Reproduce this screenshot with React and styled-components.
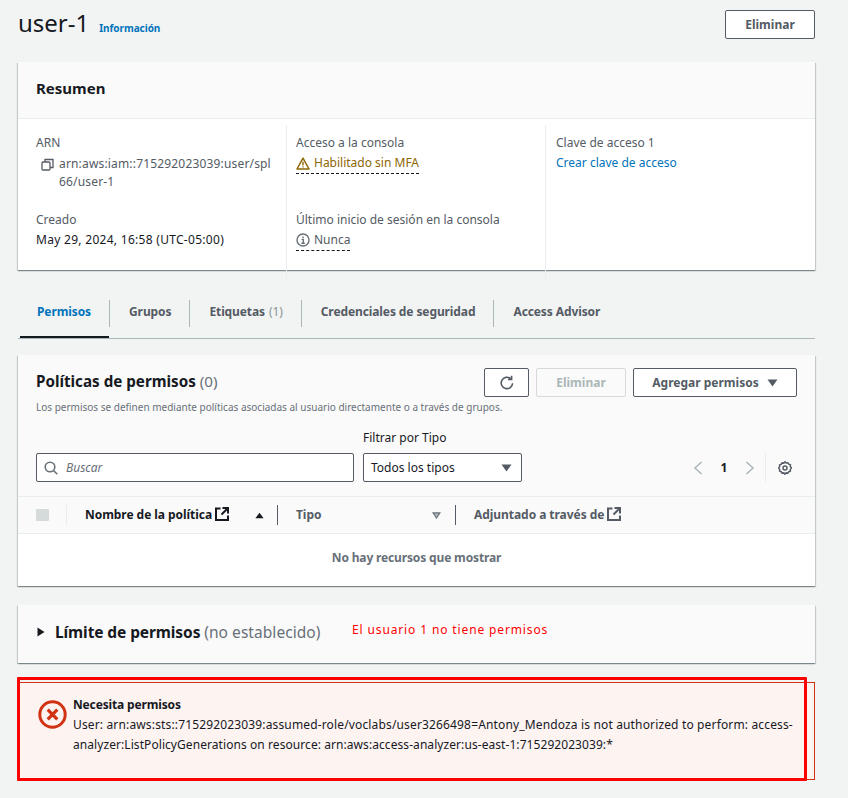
import styled, { createGlobalStyle } from 'styled-components'

const GlobalStyle = createGlobalStyle`
  html, body { margin: 0; padding: 0; background: #f2f3f3; }
  body { font-family: "Noto Sans", "Open Sans", sans-serif; font-size: 12px; color: #16191f; }
`

const Page = styled.div`
  position: relative;
  width: 848px;
  height: 798px;
  overflow: hidden;
  box-sizing: border-box;
  padding: 10px 33px 0 18px;
`

const Header = styled.div`
  display: flex;
  justify-content: space-between;
  align-items: flex-start;
  height: 52px;
`

const TitleRow = styled.div`
  display: flex;
  align-items: baseline;
  gap: 10px;
  margin-top: -3px;
`

const Title = styled.h1`
  margin: 0;
  font-size: 24px;
  line-height: 32px;
  font-weight: 400;
`

const InfoLink = styled.a`
  font-size: 10px;
  font-weight: 700;
  letter-spacing: -0.05px;
  color: #0073bb;
`

const Button = styled.button`
  box-sizing: border-box;
  height: 29px;
  width: ${p => p.$width}px;
  background: ${p => (p.$disabled ? 'transparent' : '#fff')};
  border: 1px solid ${p => (p.$disabled ? '#d5dbdb' : '#545b64')};
  border-radius: 2px;
  color: ${p => (p.$disabled ? '#aab7b8' : '#545b64')};
  font-family: inherit;
  font-size: 12px;
  font-weight: 700;
  display: flex;
  align-items: center;
  justify-content: center;
  gap: 8px;
  padding: 0;
`

const Card = styled.section`
  background: #fff;
  box-shadow: 0 1px 1px 0 rgba(0, 28, 36, 0.3), 1px 1px 1px 0 rgba(0, 28, 36, 0.15), -1px 1px 1px 0 rgba(0, 28, 36, 0.15);
`

const CardHead = styled.div`
  box-sizing: border-box;
  height: 57px;
  background: #fafafa;
  border-bottom: 1px solid #eaeded;
  padding: 16px 18px;
  font-size: 15px;
  line-height: 20px;
  font-weight: 700;
`

const Columns = styled.div`
  display: grid;
  grid-template-columns: 269px 259px 1fr;
  padding: 6px 0 9px;
  height: 136px;
`

const Column = styled.div`
  padding-left: ${p => p.$pad}px;
  border-right: ${p => (p.$last ? 0 : '1px solid #eaeded')};
  display: flex;
  flex-direction: column;
`

const Field = styled.div`
  height: 77px;
  padding-top: 8px;
  box-sizing: border-box;
  line-height: 20px;
`

const FieldLabel = styled.div`
  color: #545b64;
`

const ArnRow = styled.div`
  display: flex;
  align-items: flex-start;
  gap: 5px;
  padding-left: 5px;
  color: #545b64;
  line-height: 18px;
  letter-spacing: 0.17px;
  margin-top: 2px;
`

const ArnIcon = styled.svg`
  flex: none;
  margin-top: 3px;
`

const StatusLine = styled.span`
  display: inline-flex;
  align-items: center;
  gap: 4px;
  line-height: 20px;
  border-bottom: 1px dashed #16191f;
  color: ${p => p.$color};
`

const FieldValue = styled.div`
  color: ${p => p.$color || '#16191f'};
  letter-spacing: ${p => p.$spacing || 0}px;
`

const Tabs = styled.div`
  box-sizing: border-box;
  display: flex;
  align-items: flex-start;
  margin-top: 29px;
  height: 40px;
  border-bottom: 1px solid #aab7b8;
  padding-left: 2px;
`

const Tab = styled.div`
  box-sizing: border-box;
  height: 39px;
  padding: 3px 18px 0 ${p => p.$left}px;
  border-bottom: ${p => (p.$active ? '2px solid #16191f' : '0')};
  display: flex;
  align-items: flex-start;
  line-height: 20px;
  font-weight: 700;
  letter-spacing: -0.1px;
  color: ${p => (p.$active ? '#0073bb' : '#545b64')};
`

const TabDivider = styled.div`
  flex: none;
  width: 1px;
  height: 27px;
  margin-top: 1px;
  background: #aab7b8;
`

const TabCount = styled.span`
  color: #879596;
  font-weight: 400;
  margin-left: 4px;
`

const PolicyCard = styled(Card)`
  margin-top: 16px;
  height: 231px;
  display: flex;
  flex-direction: column;
`

const PolicyHead = styled.div`
  box-sizing: border-box;
  height: 142px;
  background: #fafafa;
  border-bottom: 1px solid #eaeded;
  padding: 13px 18px 0;
`

const PolicyTop = styled.div`
  display: flex;
  justify-content: space-between;
  align-items: flex-start;
`

const H2 = styled.h2`
  margin: 3px 0 0;
  font-size: 15.2px;
  line-height: 20px;
  font-weight: 700;
`

const Muted = styled.span`
  font-weight: 400;
  color: #687078;
  letter-spacing: 0.05px;
`

const Actions = styled.div`
  display: flex;
  gap: 7px;
`

const Description = styled.div`
  font-size: 10px;
  line-height: 14px;
  color: #687078;
  margin-top: 3px;
  height: 14px;
`

const FilterRow = styled.div`
  display: flex;
  align-items: flex-end;
  margin-top: 14px;
`

const SearchBox = styled.div`
  box-sizing: border-box;
  width: 318px;
  height: 29px;
  background: #fff;
  border: 1px solid #545b64;
  border-radius: 2px;
  display: flex;
  align-items: center;
  gap: 8px;
  padding-left: 7px;
  font-style: italic;
  color: #687078;
`

const FilterGroup = styled.div`
  margin-left: 9px;
`

const FilterLabel = styled.div`
  line-height: 20px;
  margin-bottom: 5px;
`

const SelectBox = styled.div`
  box-sizing: border-box;
  width: 159px;
  height: 29px;
  background: #fff;
  border: 1px solid #545b64;
  border-radius: 2px;
  display: flex;
  align-items: center;
  justify-content: space-between;
  padding: 0 9px 0 7px;
  color: #16191f;
`

const Pager = styled.div`
  margin-left: auto;
  height: 29px;
  display: flex;
  align-items: center;
  margin-right: 5px;
`

const PageNumber = styled.span`
  width: 42px;
  text-align: center;
  font-weight: 700;
`

const PagerDivider = styled.div`
  width: 1px;
  height: 29px;
  background: #eaeded;
  margin: 0 12px 0 10px;
`

const TableHead = styled.div`
  box-sizing: border-box;
  height: 37px;
  background: #fafafa;
  border-bottom: 1px solid #eaeded;
  display: flex;
  align-items: center;
  padding-left: 18px;
  font-weight: 700;
  letter-spacing: -0.05px;
`

const CheckBox = styled.div`
  width: 13px;
  height: 12px;
  margin-right: 17px;
  background: #d5dbdb;
  border-radius: 1px;
`

const HeadCell = styled.div`
  box-sizing: border-box;
  width: ${p => p.$width}px;
  height: 20px;
  display: flex;
  align-items: center;
  justify-content: space-between;
  padding: 0 ${p => p.$right || 0}px 0 18px;
  border-left: 1px solid ${p => p.$line};
  color: ${p => p.$color || '#545b64'};
`

const HeadLabel = styled.span`
  display: inline-flex;
  align-items: center;
  gap: 3px;
  padding-bottom: 2px;
`

const EmptyRow = styled.div`
  flex: 1;
  display: flex;
  justify-content: center;
  padding-top: 14px;
  line-height: 20px;
  font-weight: 700;
  letter-spacing: -0.15px;
  color: #687078;
`

const LimitCard = styled(Card)`
  box-sizing: border-box;
  margin-top: 19px;
  height: 58px;
  background: #fafafa;
  display: flex;
  align-items: center;
  padding: 0 0 4px 19px;
  gap: 10px;
  font-size: 15.5px;
  font-weight: 700;
  letter-spacing: -0.1px;
`

const LimitTitle = styled.div`
  line-height: 20px;
`

const Flash = styled.div`
  box-sizing: border-box;
  margin-top: 19px;
  height: 98px;
  background: #fdf3f1;
  border: 1px solid #d13212;
  display: flex;
  gap: 6px;
  padding: 12px 19px;
  line-height: 20px;
`

const FlashTitle = styled.div`
  font-weight: 700;
  letter-spacing: -0.15px;
`

const FlashBody = styled.div`
  width: 725px;
  letter-spacing: 0.15px;
`

const FlashTail = styled.span`
  letter-spacing: 0.07px;
`

// hand drawn annotations sitting on top of the screenshot
const Annotation = styled.div`
  position: absolute;
  left: 352px;
  top: 621px;
  font-size: 12px;
  line-height: 18px;
  letter-spacing: 0.87px;
  color: #ff0000;
`

const AnnotationBox = styled.div`
  position: absolute;
  box-sizing: border-box;
  left: 17px;
  top: 677px;
  width: 790px;
  height: 104px;
  border: 3px solid #ff0000;
  border-radius: 1px;
`

const Caret = ({ color = '#545b64', w = 11, h = 8, up }) => (
  <svg width={w} height={h} viewBox="0 0 11 8">
    <path d={up ? 'M0.5 7.5h10L5.5 0.5z' : 'M0.5 0.5h10L5.5 7.5z'} fill={color} />
  </svg>
)

const ExternalIcon = ({ color }) => (
  <svg width="14" height="14" viewBox="0 0 14 14" fill="none" stroke={color} strokeWidth="2">
    <path d="M5.5 1.5H1v11.5h12V8.5" />
    <path d="M7.5 1h5.5v5.5" />
    <path d="M13 1L6.5 7.5" />
  </svg>
)

function App() {
  return (
    <Page>
      <GlobalStyle />
      <Header>
        <TitleRow>
          <Title>user-1</Title>
          <InfoLink>Información</InfoLink>
        </TitleRow>
        <Button $width={90}>Eliminar</Button>
      </Header>

      <Card>
        <CardHead>Resumen</CardHead>
        <Columns>
          <Column $pad={18}>
            <Field>
              <FieldLabel>ARN</FieldLabel>
              <ArnRow>
                <ArnIcon width="13" height="13" viewBox="0 0 13 13" fill="none" stroke="#545b64" strokeWidth="1.3">
                  <rect x="1" y="4" width="8" height="8" rx="1" />
                  <path d="M4 4V1.5h8v8H9" />
                </ArnIcon>
                <span>arn:aws:iam::715292023039:user/spl<br />66/user-1</span>
              </ArnRow>
            </Field>
            <Field>
              <FieldLabel>Creado</FieldLabel>
              <FieldValue $spacing={0.29}>May 29, 2024, 16:58 (UTC-05:00)</FieldValue>
            </Field>
          </Column>
          <Column $pad={9}>
            <Field>
              <FieldLabel>Acceso a la consola</FieldLabel>
              <StatusLine $color="#8d6605">
                <svg width="14" height="13" viewBox="0 0 14 13" fill="none">
                  <path d="M7 1.2L13 12H1z" stroke="#8d6605" strokeWidth="1.5" strokeLinejoin="round" />
                  <path d="M7 4.8v3.6M7 9.4v1.2" stroke="#8d6605" strokeWidth="1.4" />
                </svg>
                Habilitado sin MFA
              </StatusLine>
            </Field>
            <Field>
              <FieldLabel>Último inicio de sesión en la consola</FieldLabel>
              <StatusLine $color="#545b64">
                <svg width="14" height="14" viewBox="0 0 14 14" fill="none">
                  <circle cx="7" cy="7" r="6" stroke="#687078" strokeWidth="1.4" />
                  <path d="M7 3.4v1.5M5.6 6.4H7.3V10M5.4 10.3h3.4" stroke="#687078" strokeWidth="1.4" />
                </svg>
                Nunca
              </StatusLine>
            </Field>
          </Column>
          <Column $pad={10} $last>
            <Field>
              <FieldLabel>Clave de acceso 1</FieldLabel>
              <FieldValue $color="#0073bb">Crear clave de acceso</FieldValue>
            </Field>
          </Column>
        </Columns>
      </Card>

      <Tabs>
        <Tab $active $left={17}>Permisos</Tab>
        <TabDivider />
        <Tab $left={19}>Grupos</Tab>
        <TabDivider />
        <Tab $left={19}>Etiquetas<TabCount>(1)</TabCount></Tab>
        <TabDivider />
        <Tab $left={19}>Credenciales de seguridad</Tab>
        <TabDivider />
        <Tab $left={19}>Access Advisor</Tab>
      </Tabs>

      <PolicyCard>
        <PolicyHead>
          <PolicyTop>
            <H2>Políticas de permisos <Muted>(0)</Muted></H2>
            <Actions>
              <Button $width={45}>
                <svg width="16" height="16" viewBox="0 0 16 16" fill="none" stroke="#545b64" strokeWidth="1.6">
                  <path d="M13.6 8.2A5.7 5.7 0 1 1 11.6 3.6" />
                  <path d="M12.6 0.8v3.6H9" />
                </svg>
              </Button>
              <Button $width={90} $disabled>Eliminar</Button>
              <Button $width={164}>Agregar permisos <Caret /></Button>
            </Actions>
          </PolicyTop>
          <Description>Los permisos se definen mediante políticas asociadas al usuario directamente o a través de grupos.</Description>
          <FilterRow>
            <SearchBox>
              <svg width="14" height="14" viewBox="0 0 14 14" fill="none" stroke="#687078" strokeWidth="1.6">
                <circle cx="6" cy="6" r="4.8" />
                <path d="M9.5 9.5L13.3 13.3" />
              </svg>
              Buscar
            </SearchBox>
            <FilterGroup>
              <FilterLabel>Filtrar por Tipo</FilterLabel>
              <SelectBox>Todos los tipos <Caret /></SelectBox>
            </FilterGroup>
            <Pager>
              <svg width="10" height="14" viewBox="0 0 10 14" fill="none" stroke="#aab7b8" strokeWidth="1.5"><path d="M8.5 1L2 7l6.5 6" /></svg>
              <PageNumber>1</PageNumber>
              <svg width="10" height="14" viewBox="0 0 10 14" fill="none" stroke="#aab7b8" strokeWidth="1.5"><path d="M1.5 1L8 7l-6.5 6" /></svg>
              <PagerDivider />
              <svg width="14" height="14" viewBox="0 0 14 14" fill="none" stroke="#545b64">
                <path strokeWidth="1.5" d="M7 0.9l1.2 1.1 1.7-.2.9 1.4 1.6.6-.1 1.7L13.4 7l-1.1 1.4.1 1.7-1.6.6-.9 1.4-1.7-.2L7 13.1l-1.2-1.2-1.7.2-.9-1.4-1.6-.6.1-1.7L.6 7l1.1-1.4-.1-1.7 1.6-.6.9-1.4 1.7.2z" />
                <circle cx="7" cy="7" r="2" strokeWidth="1.5" />
              </svg>
            </Pager>
          </FilterRow>
        </PolicyHead>
        <TableHead>
          <CheckBox />
          <HeadCell $width={211} $right={13} $line="#eaeded" $color="#16191f">
            <HeadLabel>Nombre de la política <ExternalIcon color="#16191f" /></HeadLabel>
            <Caret color="#16191f" w={9} h={7} up />
          </HeadCell>
          <HeadCell $width={178} $right={14} $line="#545b64">
            <HeadLabel>Tipo</HeadLabel>
            <svg width="9" height="7" viewBox="0 0 10 8" fill="#aab7b8" stroke="#687078" strokeWidth="1.2"><path d="M1 1h8L5 7z" /></svg>
          </HeadCell>
          <HeadCell $width={200} $line="#545b64">
            <HeadLabel>Adjuntado a través de <ExternalIcon color="#545b64" /></HeadLabel>
          </HeadCell>
        </TableHead>
        <EmptyRow>No hay recursos que mostrar</EmptyRow>
      </PolicyCard>

      <LimitCard>
        <svg width="8" height="10" viewBox="0 0 8 10"><path d="M0.5 0.5L7.5 5l-7 4.5z" fill="#16191f" /></svg>
        <LimitTitle>Límite de permisos <Muted>(no establecido)</Muted></LimitTitle>
      </LimitCard>

      <Flash>
        <svg width="29" height="29" viewBox="0 0 29 29" fill="none" stroke="#d13212" style={{ flex: 'none', marginTop: 5 }}>
          <circle cx="14.5" cy="14.5" r="12.7" strokeWidth="3" />
          <path d="M9.7 9.7l9.6 9.6M19.3 9.7l-9.6 9.6" strokeWidth="3.2" />
        </svg>
        <FlashBody>
          <FlashTitle>Necesita permisos</FlashTitle>
          User: arn:aws:sts::715292023039:assumed-role/voclabs/user3266498=Antony_Mendoza is not authorized to perform: access-<FlashTail>analyzer:ListPolicyGenerations on resource: arn:aws:access-analyzer:us-east-1:715292023039:*</FlashTail>
        </FlashBody>
      </Flash>

      <Annotation>El usuario 1 no tiene permisos</Annotation>
      <AnnotationBox />
    </Page>
  )
}

export default App
